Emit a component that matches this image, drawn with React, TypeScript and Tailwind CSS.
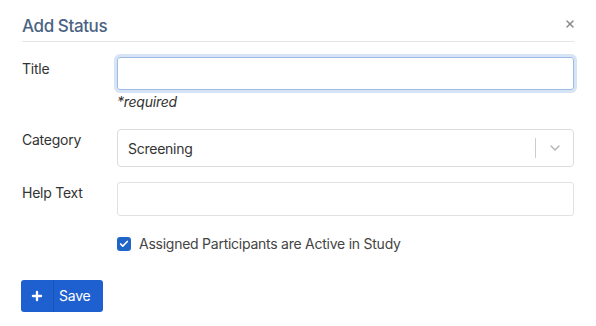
import { Plus, X, ChevronDown, Check } from "lucide-react"

export default function App() {
  return (
    <div className="h-[326px] w-[596px] bg-white font-['Inter',sans-serif] text-[14px] tracking-[-0.25px] text-[#333]">
      <div className="px-[22px] pt-[15px]">
        <div className="flex items-center justify-between border-b border-[#e5e5e5] pb-[3px]">
          <h2 className="text-[17px] leading-[23px] font-medium tracking-[-0.4px] text-[#4b6383]">Add Status</h2>
          <button className="-mr-[2px] -mt-[5px] text-[#8a8a8a]">
            <X className="h-[12px] w-[12px]" strokeWidth={3} />
          </button>
        </div>

        <div className="mt-[15px] flex">
          <label className="w-[95px] pt-[2px] leading-[20px]">Title</label>
          <div className="flex-1">
            <div className="h-[33px] rounded-[3px] border border-[#9dbbe6] shadow-[0_0_0_3px_rgba(120,165,225,0.3)]" />
            <p className="mt-[3px] italic leading-[18px]">*required</p>
          </div>
        </div>

        <div className="mt-[18px] flex">
          <label className="w-[95px] pt-[1px] leading-[20px]">Category</label>
          <div className="flex h-[38px] flex-1 items-center rounded-[4px] border border-[#dcdcdc]">
            <span className="flex-1 pl-[10px]">Screening</span>
            <span className="h-[20px] w-px bg-[#cccccc]" />
            <span className="flex w-[37px] justify-center text-[#b3b3b3]">
              <ChevronDown className="h-[16px] w-[16px]" strokeWidth={2} />
            </span>
          </div>
        </div>

        <div className="mt-[15px] flex">
          <label className="w-[95px] pt-[1px] leading-[20px]">Help Text</label>
          <div className="h-[34px] flex-1 rounded-[3px] border border-[#e2e2e2]" />
        </div>

        <div className="mt-[18px] flex items-center pl-[95px]">
          <span className="flex h-[14px] w-[14px] items-center justify-center rounded-[3px] bg-[#1f65c8]">
            <Check className="h-[10px] w-[10px] text-white" strokeWidth={4} />
          </span>
          <span className="ml-[8px] leading-[20px] text-[#444]">Assigned Participants are Active in Study</span>
        </div>

        <button className="-ml-px mt-[26px] flex h-[32px] w-[82px] items-center rounded-[3px] bg-[#1f60d1] text-white">
          <span className="flex h-full w-[33px] items-center justify-center border-r border-[#1a52b5]">
            <Plus className="h-[14px] w-[14px]" strokeWidth={4} />
          </span>
          <span className="pl-[5px] leading-[20px]">Save</span>
        </button>
      </div>
    </div>
  )
}
